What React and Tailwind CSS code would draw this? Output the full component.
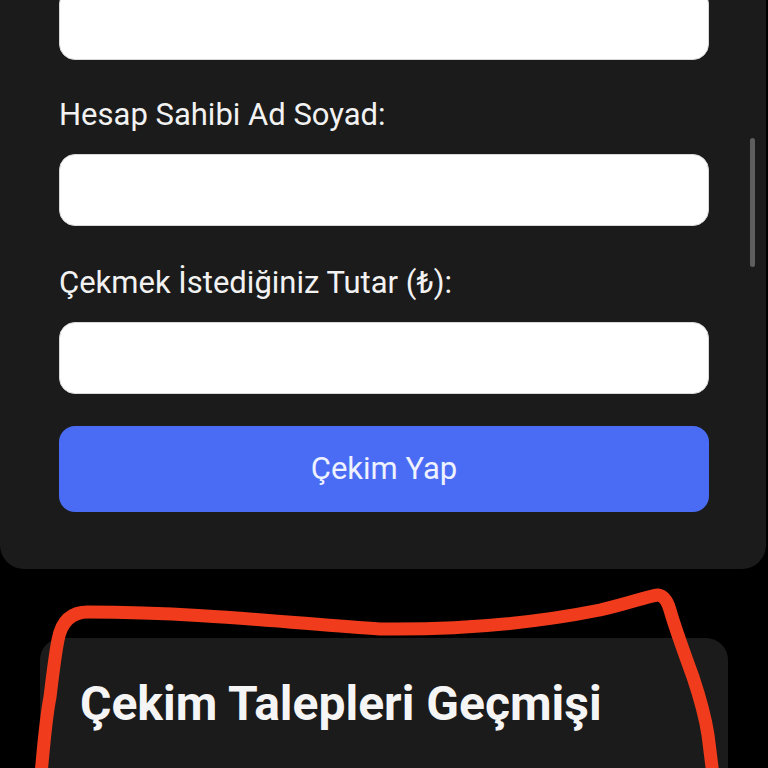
import React from "react";

function Label({ children, top }) {
  return (
    <div className={`${top} mb-[15px] text-[31px] leading-[48px] text-[#f2f2f2]`}>
      {children}
    </div>
  );
}

function Field() {
  return <div className="h-[72px] w-full rounded-[16px] bg-white border border-[#d8d8d8]" />;
}

export default function App() {
  return (
    <div className="relative h-[768px] w-[768px] overflow-hidden bg-black font-['Roboto',sans-serif]">
      <div className="-mt-[12px] w-[766px] rounded-b-[24px] bg-[#1b1b1b] px-[59px] pb-[57px] pr-[57px]">
        <Field />
        <Label top="mt-[31px]">Hesap Sahibi Ad Soyad:</Label>
        <Field />
        <Label top="mt-[33px]">Çekmek İstediğiniz Tutar (₺):</Label>
        <Field />
        <button className="mt-[32px] flex h-[86px] w-full items-center justify-center rounded-[16px] bg-[#4a6cf4] text-[31px] text-[#eef1ff]">
          Çekim Yap
        </button>
      </div>

      <div className="ml-[40px] mt-[69px] h-[200px] w-[688px] rounded-[22px] bg-[#1b1b1b] px-[40px] pt-[36px]">
        <h2 className="text-[48px] font-bold leading-[60px] text-[#f5f5f5]">Çekim Talepleri Geçmişi</h2>
      </div>

      <div className="absolute left-[750px] top-[138px] h-[129px] w-[5px] rounded-full bg-[#5e5e5e]" />

      <svg className="pointer-events-none absolute inset-0" width="768" height="768" viewBox="0 0 768 768">
        <path
          d="M 41 775 C 44 740, 47 712, 50 697 C 53 672, 55 655, 58 640 Q 63 612 88 612 C 200 612, 300 624, 380 629 C 460 630, 530 624, 600 610 C 630 603, 648 596, 658 595 Q 666 596 670 610 C 675 628, 685 655, 693 677 C 700 698, 705 715, 708 735 L 713 775"
          fill="none"
          stroke="#f03c1c"
          strokeWidth="13"
          strokeLinecap="round"
          strokeLinejoin="round"
        />
      </svg>
    </div>
  );
}
